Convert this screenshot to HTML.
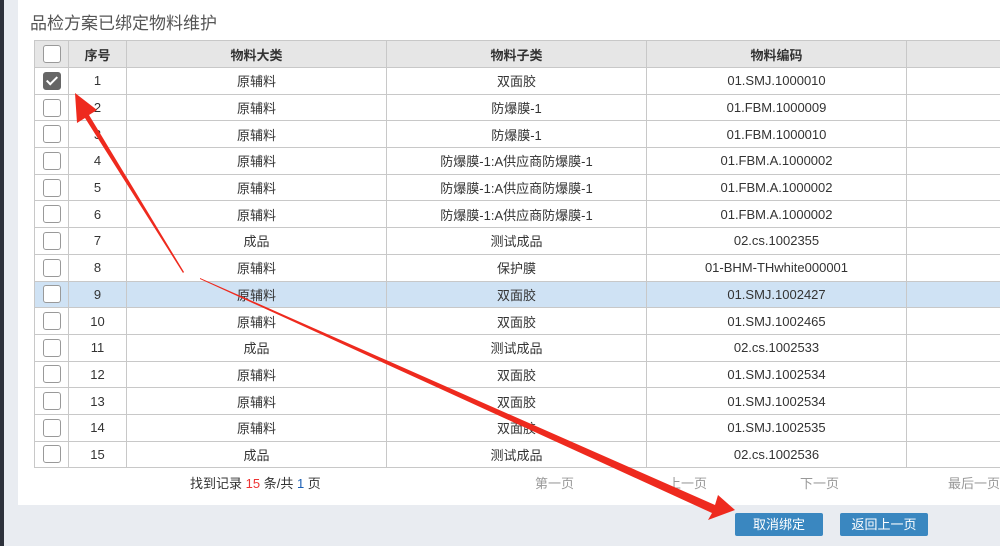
<!DOCTYPE html>
<html><head><meta charset="utf-8"><style>
body{margin:0;width:1000px;height:546px;background:#e9ecf1;position:relative;overflow:hidden;font-family:"Liberation Sans","Noto Sans CJK SC",sans-serif;}
.strip{position:absolute;left:0;top:0;width:4px;height:546px;background:#2d313b}
.panel{position:absolute;left:18px;top:0;width:990px;height:505px;background:#fff}
.title{position:absolute;left:30px;top:9px;font-size:17px;color:#555}
table{position:absolute;left:34px;top:40px;width:992px;border-collapse:collapse;table-layout:fixed;font-size:13px;color:#333}
td,th{border:1px solid #c8c8c8;text-align:center;padding:0;height:25.7px;white-space:nowrap;overflow:hidden}
th{background:#e6e6e6;font-weight:bold;height:26px}
tr.sel td{background:#cfe2f4}
.cb{display:inline-block;width:16px;height:16px;border:1.5px solid #999;border-radius:3px;background:#fff;vertical-align:middle}
.cb.on{background:#666;border-color:#666;position:relative}
.cb.on:after{content:"";position:absolute;left:5px;top:1px;width:4px;height:9px;border:solid #fff;border-width:0 2.5px 2.5px 0;transform:rotate(45deg)}
.pg{position:absolute;top:473px;font-size:13px;color:#999}
.btn{position:absolute;top:513px;height:23px;width:88px;background:#3a87c0;color:#fff;font-size:13px;text-align:center;line-height:23px;border-radius:2px}
</style></head><body>
<div class="strip"></div>
<div class="panel"></div>
<div class="title">品检方案已绑定物料维护</div>
<table>
<colgroup><col style="width:34px"><col style="width:58px"><col style="width:260px"><col style="width:260px"><col style="width:260px"><col style="width:120px"></colgroup>
<tr><th><span class="cb"></span></th><th>序号</th><th>物料大类</th><th>物料子类</th><th>物料编码</th><th></th></tr>
<tr><td><span class="cb on"></span></td><td>1</td><td>原辅料</td><td>双面胶</td><td>01.SMJ.1000010</td><td></td></tr>
<tr><td><span class="cb"></span></td><td>2</td><td>原辅料</td><td>防爆膜-1</td><td>01.FBM.1000009</td><td></td></tr>
<tr><td><span class="cb"></span></td><td>3</td><td>原辅料</td><td>防爆膜-1</td><td>01.FBM.1000010</td><td></td></tr>
<tr><td><span class="cb"></span></td><td>4</td><td>原辅料</td><td>防爆膜-1:A供应商防爆膜-1</td><td>01.FBM.A.1000002</td><td></td></tr>
<tr><td><span class="cb"></span></td><td>5</td><td>原辅料</td><td>防爆膜-1:A供应商防爆膜-1</td><td>01.FBM.A.1000002</td><td></td></tr>
<tr><td><span class="cb"></span></td><td>6</td><td>原辅料</td><td>防爆膜-1:A供应商防爆膜-1</td><td>01.FBM.A.1000002</td><td></td></tr>
<tr><td><span class="cb"></span></td><td>7</td><td>成品</td><td>测试成品</td><td>02.cs.1002355</td><td></td></tr>
<tr><td><span class="cb"></span></td><td>8</td><td>原辅料</td><td>保护膜</td><td>01-BHM-THwhite000001</td><td></td></tr>
<tr class="sel"><td><span class="cb"></span></td><td>9</td><td>原辅料</td><td>双面胶</td><td>01.SMJ.1002427</td><td></td></tr>
<tr><td><span class="cb"></span></td><td>10</td><td>原辅料</td><td>双面胶</td><td>01.SMJ.1002465</td><td></td></tr>
<tr><td><span class="cb"></span></td><td>11</td><td>成品</td><td>测试成品</td><td>02.cs.1002533</td><td></td></tr>
<tr><td><span class="cb"></span></td><td>12</td><td>原辅料</td><td>双面胶</td><td>01.SMJ.1002534</td><td></td></tr>
<tr><td><span class="cb"></span></td><td>13</td><td>原辅料</td><td>双面胶</td><td>01.SMJ.1002534</td><td></td></tr>
<tr><td><span class="cb"></span></td><td>14</td><td>原辅料</td><td>双面胶</td><td>01.SMJ.1002535</td><td></td></tr>
<tr><td><span class="cb"></span></td><td>15</td><td>成品</td><td>测试成品</td><td>02.cs.1002536</td><td></td></tr>
</table>
<div class="pg" style="left:190px;color:#333">找到记录 <span style="color:#e33">15</span> 条/共 <span style="color:#1a5fb4">1</span> 页</div>
<div class="pg" style="left:535px">第一页</div>
<div class="pg" style="left:668px">上一页</div>
<div class="pg" style="left:800px">下一页</div>
<div class="pg" style="left:948px">最后一页</div>
<div class="btn" style="left:735px">取消绑定</div>
<div class="btn" style="left:840px">返回上一页</div>
<svg width="1000" height="546" style="position:absolute;left:0;top:0">
<polygon points="183,273 184,272 89,115 97,110 75,93 77,123 85,118" fill="#ee2a1e"/>
<polygon points="200,278 200,279 712,513 708,520 735,510 718,495 715,505" fill="#ee2a1e"/>
</svg>
</body></html>
